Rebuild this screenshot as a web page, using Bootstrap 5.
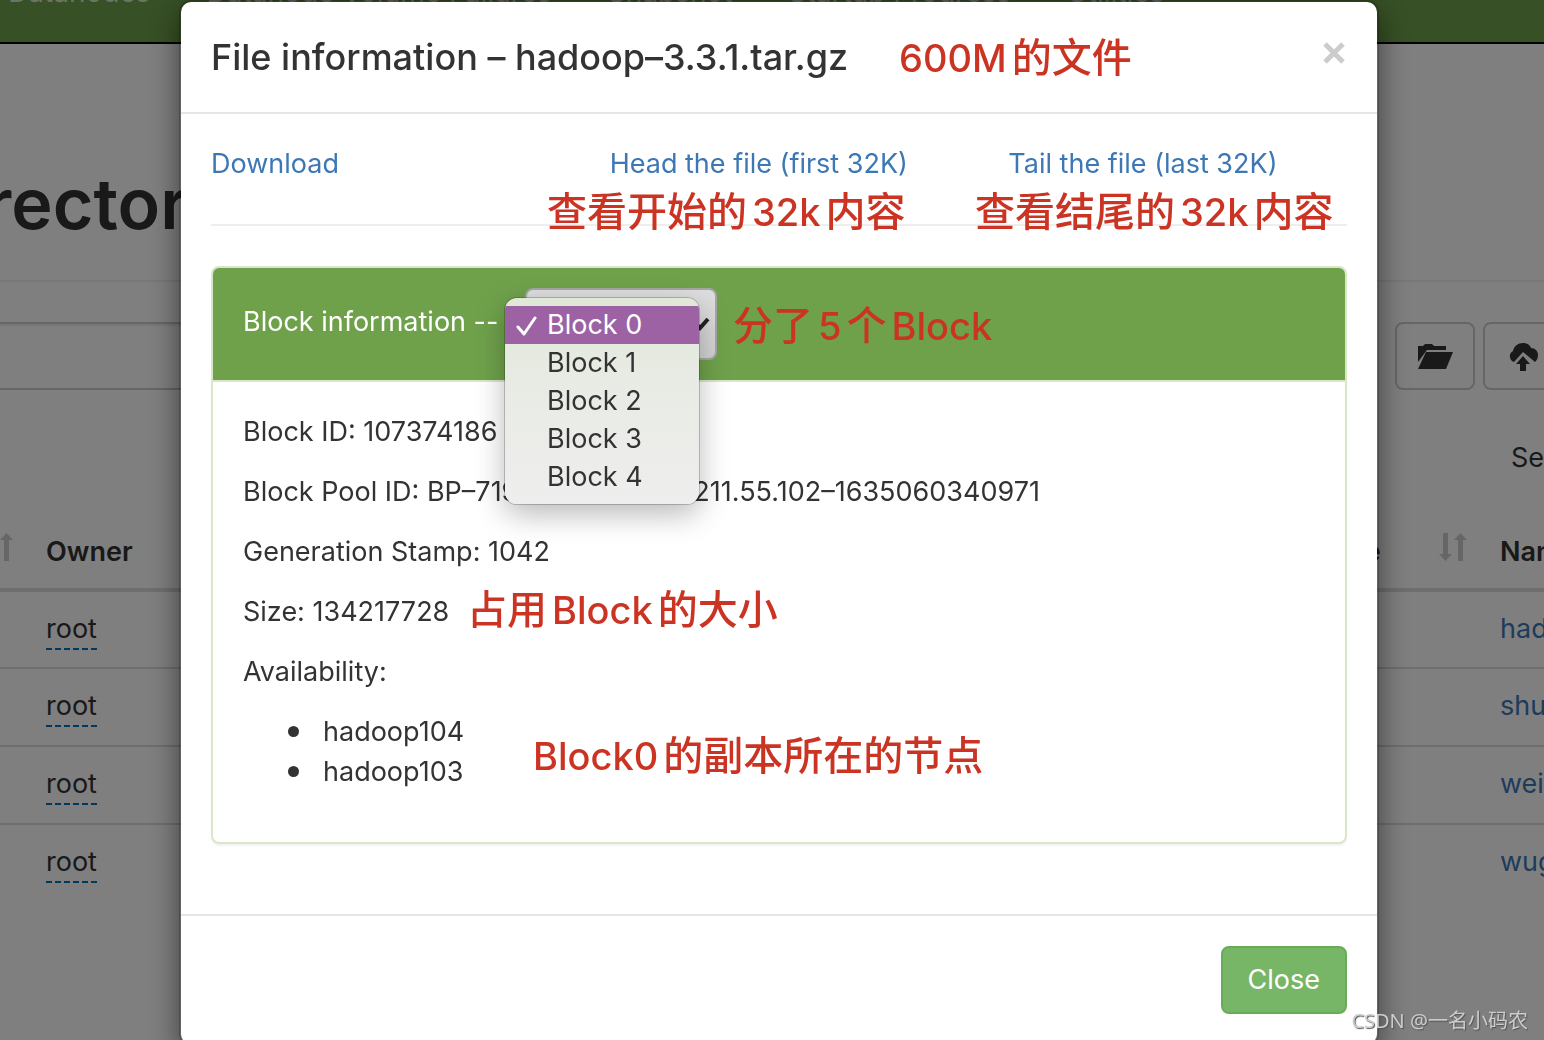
<!DOCTYPE html>
<html lang="en">
<head>
<meta charset="utf-8">
<meta name="viewport" content="width=device-width, initial-scale=1">
<title>Browsing HDFS</title>
<link href="https://cdn.jsdelivr.net/npm/bootstrap@5.3.0/dist/css/bootstrap.min.css" rel="stylesheet">
<style>
  body { font-family: Inter, "Noto Sans CJK SC", sans-serif; font-size: 27px; line-height: 40px; color: #333; overflow: hidden; height: 100vh; }
  a { color: #3d78b5; text-decoration: none; }
  .explorer { height: 100vh; overflow: hidden; }

  /* page under the backdrop */
  .topbar { height: 102px; margin-top: -58px; margin-left: -20px; background: #6fa14b; border-bottom: 2px solid #000; white-space: nowrap; }
  .topbar .nav-link { color: #d9e8cc; padding: 30px 28px; font-size: 28px; }
  .page-title { font-size: 70px; line-height: 80px; font-weight: 600; margin: 120px 0 36px -354px; white-space: nowrap; }
  .title-rule { border-bottom: 2px solid #eee; }
  .toolbar { padding-top: 40px; width: 1691px; margin-left: -40px; }
  .path-box { height: 68px; border: 2px solid #ccc; border-radius: 8px; font-size: 27px; box-shadow: inset 0 2px 2px rgba(0,0,0,.08); }
  .tool-btn { width: 80px; height: 68px; border: 2px solid #ccc; border-radius: 8px; color: #333; background: #fff; padding: 0; }
  .tool-btn svg { width: 36px; height: 32px; }
  .search-row { padding: 37px 0 0 1511px; width: 1900px; }
  .search-row input { width: 200px; height: 60px; }
  .listing { width: 1930px; max-width: none; margin: 29px 0 0 -200px; table-layout: fixed; color: #333; }
  .listing th { padding: 16px; height: 74px; border-bottom: 4px solid #ddd; font-weight: 600; white-space: nowrap; vertical-align: middle; }
  .listing td { padding: 15px 16px; height: 78px; border-bottom: 2px solid #ddd; line-height: 44px; white-space: nowrap; vertical-align: top; }
  .listing tr:last-child td { border-bottom: 0; }
  .listing svg { width: 30px; height: 30px; flex: none; }
  .w-perm { width: 230px; } .w-owner, .w-mid { width: 200px; } .w-blk { width: 254px; }
  .editable { display: inline-block; line-height: 38px; border-bottom: 2px dashed #0073b8; color: #333; }
  .modal-backdrop.show { opacity: .5; }

  /* dialog */
  .modal { overflow: hidden; }
  .file-dialog { max-width: 1200px; margin: 0 auto; left: 7px; }
  .file-dialog .modal-content { border: 2px solid rgba(0,0,0,.2); border-radius: 12px; background-clip: padding-box; box-shadow: 0 10px 30px rgba(0,0,0,.5); color: #333; }
  .file-dialog .modal-header { padding: 30px; border-bottom: 2px solid #e5e5e5; height: 112px; }
  .file-dialog .modal-title { font-size: 36px; line-height: 50px; font-weight: 500; }
  .dismiss { border: 0; background: none; padding: 0; color: #ccc; line-height: 0; margin-top: -8px; }
  .dismiss svg { width: 26px; height: 26px; }
  .file-dialog .modal-body { padding: 30px; }
  .file-dialog .modal-footer { padding: 30px; border-top: 2px solid #e5e5e5; }
  .file-dialog .modal-footer > * { margin: 0; }
  .file-links { --bs-gutter-x: 60px; }
  .soft-rule { border-top: 2px solid #eee; margin: 40px 0; opacity: 1; }
  .block-panel { border: 2px solid #d9e6c9; border-radius: 8px; margin-bottom: 40px; box-shadow: 0 2px 2px rgba(0,0,0,.05); }
  .block-head { background: #6fa14b; color: #fff; padding: 20px 30px; border-bottom: 2px solid #d9e6c9; border-radius: 6px 6px 0 0; }
  .block-head label { width: 282px; white-space: nowrap; margin-top: -4px; }
  .block-pick { width: 192px; height: 72px; border: 2px solid #a6a6a6; border-radius: 8px; appearance: none; font-size: 27px; padding: 0 20px; color: #333; background: linear-gradient(#dedede, #d2d2d2); }
  .pick-arrow { position: absolute; right: 7px; top: 28px; width: 20px; height: 16px; }
  .block-body { padding: 30px; }
  .block-body p, .block-body ul { margin: 0 0 20px; }
  .block-body ul { padding-left: 80px; list-style: none; }
  .block-body li { position: relative; }
  .block-body li::before { content: ""; position: absolute; left: -35px; top: 14px; width: 11px; height: 11px; border-radius: 50%; background: #333; }
  .pick-menu { position: absolute; left: -20px; top: 10px; width: 194px; padding: 8px 0; margin: 0; list-style: none; border-radius: 12px; overflow: hidden; background: linear-gradient(#e0e8d8, #e8ebe4 40%, #eee); box-shadow: 0 0 0 1px rgba(0,0,0,.2), 0 10px 30px rgba(0,0,0,.28); z-index: 3; color: #333; }
  .pick-menu li { height: 38px; line-height: 38px; padding-left: 42px; position: relative; white-space: nowrap; }
  .pick-menu .chosen { background: #9c62a4; color: #fff; }
  .pick-menu svg { position: absolute; left: 11px; top: 9px; width: 22px; height: 22px; }
  .btn-close-file { height: 68px; padding: 0 25px; border: 2px solid #68ab58; border-radius: 8px; background: #77b667; color: #fff; font-size: 27px; }

  /* red notes laid over the dialog */
  .note { position: absolute; color: #cb3423; font-size: 40px; line-height: 52px; font-weight: 500; white-space: nowrap; z-index: 2; }
  .note b { font-size: 38px; font-weight: 500; margin: 0 5px; }
  .note .lead-in { margin-left: 0; }
  .note-size { left: 718px; top: 30px; }
  .note-head { left: 366px; top: 184px; }
  .note-tail { left: 794px; top: 184px; }
  .note-count { left: 552px; top: 298px; }
  .note-used { left: 286px; top: 582px; }
  .note-nodes { left: 352px; top: 728px; }
  .watermark { position: fixed; right: 16px; bottom: 4px; z-index: 2000; font: 20px/30px "Noto Sans", "Noto Sans CJK SC", sans-serif; color: #ccc; text-shadow: 1px 1px 1px #555; }
</style>
</head>
<body>
<div class="explorer">
  <nav class="topbar" aria-label="Main">
    <ul class="nav flex-nowrap">
      <li class="nav-item"><a class="nav-link" href="#">Datanodes</a></li>
      <li class="nav-item"><a class="nav-link" href="#">Datanode Volume Failures</a></li>
      <li class="nav-item"><a class="nav-link" href="#">Snapshot</a></li>
      <li class="nav-item"><a class="nav-link" href="#">Startup Progress</a></li>
      <li class="nav-item"><a class="nav-link" href="#">Utilities</a></li>
    </ul>
  </nav>
  <div class="title-rule"><h1 class="page-title">Browse Directory</h1></div>
  <div class="toolbar d-flex">
    <input class="form-control path-box me-auto" type="text" aria-label="Directory path">
    <div class="d-flex flex-shrink-0 ps-5 gap-2 justify-content-end">
      <button class="tool-btn" type="button" aria-label="Create directory"><svg viewBox="0 0 36 32"><path fill="currentColor" d="M1 4h5l2-2h7l2 2h12v4H10L1 20zM9 10h27l-7 17H1z"/></svg></button>
      <button class="tool-btn" type="button" aria-label="Upload files"><svg viewBox="0 0 36 32"><path fill="currentColor" d="M9 20a6 6 0 0 1-1-11C9 4 13 1 18 1c4 0 7 2 8 5 4 0 7 3 7 7 0 3-1 5-3 7L18 10zM18 14l7 8h-4v7h-6v-7h-4z"/></svg></button>
      <button class="tool-btn" type="button" aria-label="Cut"></button>
    </div>
  </div>
  <div class="search-row"><label>Search: <input type="search"></label></div>
  <table class="listing">
    <colgroup><col class="w-perm"><col class="w-owner"><col class="w-mid"><col class="w-mid"><col class="w-mid"><col class="w-mid"><col class="w-mid"><col class="w-blk"><col></colgroup>
    <thead>
      <tr>
        <th><div class="d-flex justify-content-between">Permission<svg viewBox="0 0 30 30"><path fill="#ccc" d="M5 1h5v21h4l-6.500 7L1 22h4zM20 29h5V8h4l-6.500-7L16 8h4z"/></svg></div></th>
        <th>Owner</th><th></th><th></th><th></th><th></th><th></th>
        <th><div class="d-flex justify-content-between">Block Size<svg viewBox="0 0 30 30"><path fill="#ccc" d="M5 1h5v21h4l-6.500 7L1 22h4zM20 29h5V8h4l-6.500-7L16 8h4z"/></svg></div></th>
        <th>Name</th>
      </tr>
    </thead>
    <tbody>
      <tr><td></td><td><a class="editable" href="#">root</a></td><td></td><td></td><td></td><td></td><td></td><td></td><td><a href="#">hadoop-3.3.1.tar.gz</a></td></tr>
      <tr><td></td><td><a class="editable" href="#">root</a></td><td></td><td></td><td></td><td></td><td></td><td></td><td><a href="#">shuguo</a></td></tr>
      <tr><td></td><td><a class="editable" href="#">root</a></td><td></td><td></td><td></td><td></td><td></td><td></td><td><a href="#">weiguo</a></td></tr>
      <tr><td></td><td><a class="editable" href="#">root</a></td><td></td><td></td><td></td><td></td><td></td><td></td><td><a href="#">wuguo</a></td></tr>
    </tbody>
  </table>
</div>

<div class="modal-backdrop show"></div>
<div class="modal show d-block" role="dialog" aria-labelledby="fileTitle">
  <div class="modal-dialog file-dialog">
    <div class="modal-content">
      <div class="modal-header align-items-center">
        <h4 class="modal-title" id="fileTitle">File information – hadoop–3.3.1.tar.gz</h4>
        <button class="dismiss" type="button" aria-label="Dismiss"><svg viewBox="0 0 26 26"><path d="M4 4l18 18M22 4L4 22" stroke="currentColor" stroke-width="5"/></svg></button>
      </div>
      <div class="modal-body">
        <div class="row file-links">
          <div class="col-4"><a href="#">Download</a></div>
          <div class="col-4"><a href="#">Head the file (first 32K)</a></div>
          <div class="col-4"><a href="#">Tail the file (last 32K)</a></div>
        </div>
        <hr class="soft-rule">
        <section class="block-panel">
          <div class="block-head d-flex align-items-center">
            <label for="blockPick">Block information --</label>
            <div class="position-relative">
              <select class="block-pick d-block" id="blockPick"><option>Block 0</option><option>Block 1</option><option>Block 2</option><option>Block 3</option><option>Block 4</option></select>
              <svg class="pick-arrow" viewBox="0 0 20 16"><path d="M3 5l7 7 8-9" fill="none" stroke="#222" stroke-width="4"/></svg>
              <ul class="pick-menu">
                <li class="chosen"><svg viewBox="0 0 22 22"><path d="M2 12l6 7L19 3" fill="none" stroke="#fff" stroke-width="3" stroke-linecap="round" stroke-linejoin="round"/></svg>Block 0</li>
                <li>Block 1</li><li>Block 2</li><li>Block 3</li><li>Block 4</li>
              </ul>
            </div>
          </div>
          <div class="block-body">
            <p>Block ID: 107374186</p>
            <p>Block Pool ID: BP–71956712630–10.211.55.102–1635060340971</p>
            <p>Generation Stamp: 1042</p>
            <p>Size: 134217728</p>
            <p>Availability:</p>
            <ul><li>hadoop104</li><li>hadoop103</li></ul>
          </div>
        </section>
      </div>
      <div class="modal-footer"><button class="btn-close-file" type="button">Close</button></div>
      <span class="note note-size"><b class="lead-in">600M</b>的文件</span>
      <span class="note note-head">查看开始的<b>32k</b>内容</span>
      <span class="note note-tail">查看结尾的<b>32k</b>内容</span>
      <span class="note note-count">分了<b>5</b>个<b>Block</b></span>
      <span class="note note-used">占用<b>Block</b>的大小</span>
      <span class="note note-nodes"><b class="lead-in">Block0</b>的副本所在的节点</span>
    </div>
  </div>
</div>
<div class="watermark">CSDN @一名小码农</div>
<script src="https://cdn.jsdelivr.net/npm/bootstrap@5.3.0/dist/js/bootstrap.bundle.min.js"></script>
</body>
</html>
